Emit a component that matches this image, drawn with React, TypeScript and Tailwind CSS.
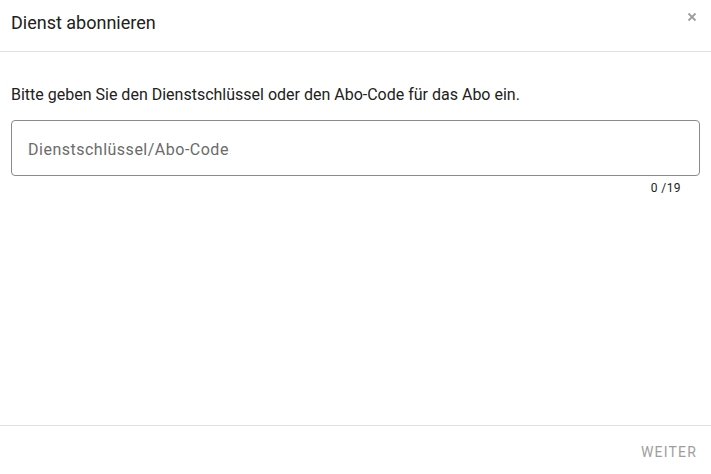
export default function App() {
  return (
    <div className="flex h-[474px] w-[711px] flex-col bg-white font-['Roboto',sans-serif] text-[#212121]">
      {/* Header */}
      <div className="flex h-[52px] items-start justify-between border-b border-[#e0e0e0] pl-[11px] pr-[14px]">
        <h1 className="pt-[11px] text-[18px] leading-[24px]">Dienst abonnieren</h1>
        <button className="mt-[12px] text-[#9e9e9e]">
          <svg width="10" height="10" viewBox="0 0 10 10">
            <path d="M1.5 1.5L8.5 8.5M8.5 1.5L1.5 8.5" stroke="currentColor" strokeWidth="1.8" />
          </svg>
        </button>
      </div>

      {/* Body */}
      <div className="flex-1 px-[11px] pt-[32px]">
        <p className="text-[16px] leading-[22px]">
          Bitte geben Sie den Dienstschlüssel oder den Abo-Code für das Abo ein.
        </p>
        <div className="mt-[14px] flex h-[56px] items-center rounded-[4px] border border-[#8a8a8a] px-[16px]">
          <input
            className="w-full bg-transparent pt-[3px] text-[16px] tracking-[0.5px] text-[#212121] outline-none placeholder:text-[#6b6b6b]"
            placeholder="Dienstschlüssel/Abo-Code"
          />
        </div>
        <div className="mt-[4px] pr-[19px] text-right text-[12px] leading-[16px] tracking-[0.4px]">0 /19</div>
      </div>

      {/* Footer */}
      <div className="flex h-[49px] items-center justify-end border-t border-[#e0e0e0] pr-[14px] pt-[4px]">
        <button className="text-[14px] uppercase tracking-[1.2px] text-[#9e9e9e]">Weiter</button>
      </div>
    </div>
  )
}
